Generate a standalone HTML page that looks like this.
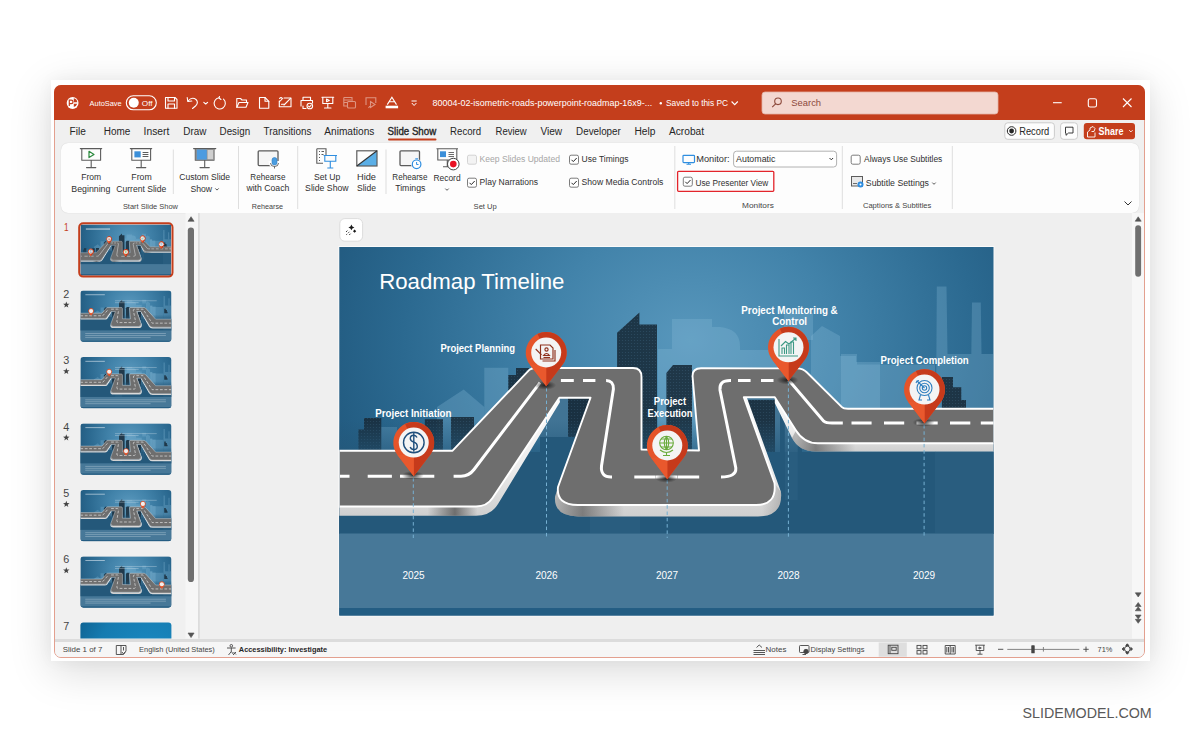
<!DOCTYPE html>
<html><head><meta charset="utf-8">
<style>
*{margin:0;padding:0;box-sizing:border-box}
html,body{width:1200px;height:743px;overflow:hidden;background:#fff}
body{position:relative;font-family:"Liberation Sans",sans-serif;color:#262626}
.b{position:absolute}
svg text{font-family:"Liberation Sans",sans-serif}
</style></head><body>
<div class="b" style="left:51px;top:80px;width:1099px;height:581px;background:#fff;box-shadow:0 10px 40px rgba(0,0,0,0.15),0 0 16px rgba(0,0,0,0.04)"></div>
<div class="b" style="left:54px;top:85px;width:1091px;height:573px;border:1px solid #e3a08f;border-radius:7px;background:#f0f0f0"></div>
<div class="b" style="left:54px;top:85px;width:1091px;height:35px;background:#c43e1c;border-radius:7px 7px 0 0"></div>
<div class="b" style="left:61px;top:142.5px;width:1078px;height:70px;background:#fdfdfd;border-radius:7px;box-shadow:0 0 1px rgba(0,0,0,0.2)"></div>
<div class="b" style="left:199px;top:213px;width:934px;height:428px;background:#efefef"></div>
<div class="b" style="left:55px;top:638.8px;width:1089px;height:18.2px;background:#f6f6f6;border-top:3px solid #dcdcdc;border-radius:0 0 6px 6px"></div>
<svg class="ov" width="1200" height="743" viewBox="0 0 1200 743" style="position:absolute;left:0;top:0">
<defs>
<clipPath id="sc"><rect x="339.3" y="247" width="654.2" height="368.5"/></clipPath>
<radialGradient id="bg" cx="690" cy="340" r="400" gradientUnits="userSpaceOnUse" gradientTransform="translate(690,340) scale(1,0.85) translate(-690,-340)">
 <stop offset="0" stop-color="#5897bc"/><stop offset="0.35" stop-color="#4283aa"/><stop offset="0.72" stop-color="#2b6990"/><stop offset="1" stop-color="#1f567b"/>
</radialGradient>
<linearGradient id="low" x1="0" y1="420" x2="0" y2="470" gradientUnits="userSpaceOnUse">
 <stop offset="0" stop-color="#24587a" stop-opacity="0"/><stop offset="1" stop-color="#24587a" stop-opacity="1"/>
</linearGradient>
<linearGradient id="slab" x1="0" y1="0" x2="0" y2="1">
 <stop offset="0" stop-color="#fbfbfb"/><stop offset="0.6" stop-color="#ececec"/><stop offset="1" stop-color="#cfcfcf"/>
</linearGradient>
<linearGradient id="pinL" x1="0" y1="0" x2="1" y2="0">
 <stop offset="0.5" stop-color="#e6552a"/><stop offset="0.5" stop-color="#cf441f"/>
</linearGradient>
<linearGradient id="sd1" x1="339" x2="500" y1="0" y2="0" gradientUnits="userSpaceOnUse"><stop offset="0.55" stop-color="#444" stop-opacity="0"/><stop offset="0.72" stop-color="#444" stop-opacity="0.7"/><stop offset="0.86" stop-color="#444" stop-opacity="0"/></linearGradient>
<linearGradient id="sd2" x1="555" x2="785" y1="0" y2="0" gradientUnits="userSpaceOnUse"><stop offset="0" stop-color="#444" stop-opacity="0.25"/><stop offset="0.12" stop-color="#444" stop-opacity="0.6"/><stop offset="0.3" stop-color="#444" stop-opacity="0"/><stop offset="0.9" stop-color="#444" stop-opacity="0"/><stop offset="1" stop-color="#444" stop-opacity="0.3"/></linearGradient>
<linearGradient id="sd3" x1="796" x2="994" y1="0" y2="0" gradientUnits="userSpaceOnUse"><stop offset="0" stop-color="#444" stop-opacity="0.3"/><stop offset="0.1" stop-color="#444" stop-opacity="0.6"/><stop offset="0.3" stop-color="#444" stop-opacity="0"/></linearGradient>
<linearGradient id="hole" x1="0" y1="396" x2="0" y2="440" gradientUnits="userSpaceOnUse"><stop offset="0" stop-color="#26587a"/><stop offset="1" stop-color="#24587a"/></linearGradient>
<radialGradient id="psh"><stop offset="0" stop-color="#111" stop-opacity="0.85"/><stop offset="1" stop-color="#111" stop-opacity="0"/></radialGradient>
<pattern id="dots" width="3" height="3" patternUnits="userSpaceOnUse"><rect width="3" height="3" fill="#182c3b"/><circle cx="1.5" cy="1.5" r="0.6" fill="#284357"/></pattern>
</defs><rect x="338.3" y="246" width="656.2" height="370.5" fill="#fafafa"/><g clip-path="url(#sc)"><g>
<rect x="339" y="246" width="656" height="371" fill="url(#bg)"/>
<rect x="540" y="396" width="60" height="120" fill="url(#hole)"/>
<rect x="738" y="396" width="64" height="120" fill="url(#hole)"/>
<g fill="#8cc0dc" fill-opacity="0.28"><path d="M381,427 H397 V452 H381Z"/><path d="M437,407 L463.7,389.5 L484.3,407 V452 H437Z"/><path d="M484.3,367.8 H508.3 V452 H484.3Z"/><path d="M672,319 H712 V327 H720 Q740,329 740,346 V452 H672Z"/><path d="M740,350 H780 V452 H740Z"/><path d="M658,349 H672 V452 H658Z"/><path d="M811,336 L822,326 L840,336 V356 H856 V362 H880 V452 H811Z"/><path d="M841,354 H857 V452 H841Z"/><path d="M784,313 H813 V340 H784Z"/><path d="M857,364.4 H935 V452 H857Z"/><path d="M936.8,286.6 H946.5 L947.5,354 H993.5 V452 H935.8Z"/><path d="M972,302.6 H980.8 L981.5,354 H971.3Z"/><path d="M540,398 H568 V437 H540Z"/><path d="M784.8,397 H797.7 V457.5 H784.8Z"/></g><g fill="url(#dots)" fill-opacity="0.9"><path d="M358.4,429.6 H364 V418 H381.3 V452 H358.4Z"/><path d="M424.8,419.3 H443 V452 H424.8Z"/><path d="M451,417 H474 V452 H451Z"/><path d="M508.3,375 H516 V368 H529 V452 H508.3Z"/><path d="M617.1,332.7 L639.4,312.5 V324.6 H657 V452 H617.1Z"/><path d="M666.4,373 L673,365 H692 V452 H666.4Z"/><path d="M941.9,377 H953 V387.3 H961.3 V399.9 H966 V410 H941.9Z"/><path d="M568,398 H597 V437 H568Z"/><path d="M748,400 H775 V480 H748Z"/></g><rect x="339" y="420" width="656" height="114" fill="url(#low)"/><rect x="339" y="452" width="656" height="82" fill="#24587a"/><g fill="#8cc0dc" fill-opacity="0.06"><path d="M590,452 H640 V533 H590Z"/><path d="M784.8,452 H797.7 V500 H784.8Z"/><path d="M935,452 H993 V533 H935Z"/></g><rect x="339" y="533.5" width="656" height="75" fill="#477898"/><rect x="339" y="608.1" width="656" height="8" fill="#235d83"/></g><g><g fill="url(#slab)"><path d="M339,506.5 L476,506.5 Q487,506.5 492.5,498 L559.3,397.7 L560,402 L498,504 Q491,515.8 476,515.8 L339,515.8Z"/><path d="M558,487 Q556,505 578,505 L756,505 Q777,505 775,484 L744,397.5 L747,398 L781,492 Q783,516.5 758,516.5 L578,516.5 Q554,516 555,497Z"/><path d="M774.8,397.3 L796,430.5 Q804,443.3 818,443.3 L994,443.3 L994,451.5 L816,451.5 Q799,451.5 792,438 L774.8,403Z"/></g><g fill="#3a3a3a"><path d="M339,506.5 L476,506.5 Q487,506.5 492.5,498 L498,504 Q491,515.8 476,515.8 L339,515.8Z" fill="url(#sd1)"/><path d="M558,487 Q556,505 578,505 L756,505 Q777,505 775,484 L781,492 Q783,516.5 758,516.5 L578,516.5 Q554,516 555,497Z" fill="url(#sd2)"/><path d="M796,430.5 Q804,443.3 818,443.3 L994,443.3 L994,451.5 L816,451.5 Q799,451.5 792,438Z" fill="url(#sd3)"/></g><path d="M339,450.7 L452.6,450.7 L529.3,369.9 Q531.5,368 536,368 L633,368 Q641.5,368 641.5,377 L641.5,449.5 L699,450.5 L692.5,376 Q692.5,368.3 701,368.3 L797,368.4 Q803,368.4 807,372.5 L841.9,407.1 Q843.5,408.7 848,408.7 L994,408.7 L994,443.3 L818,443.3 Q804,443.3 796,430.5 L774.8,397.3 L743.8,397.3 L774.5,483 Q777,505 756,505 L578,505 Q556,505 558,487 L590.5,397.7 L559.3,397.7 L492.5,498 Q487,506.5 476,506.5 L339,506.5Z" fill="#6e6e6e" stroke="#ffffff" stroke-width="1.9" stroke-linejoin="round"/><g stroke="#ffffff" stroke-width="3" fill="none"><line x1="340" y1="476.2" x2="349.5" y2="476.2"/><line x1="367.7" y1="476.2" x2="391.9" y2="476.2"/><line x1="400" y1="476.2" x2="434.3" y2="476.2"/><line x1="560.9" y1="380.5" x2="573.8" y2="380.5"/><line x1="583" y1="380.5" x2="595.4" y2="380.5"/><line x1="738" y1="380.5" x2="750.6" y2="380.5"/><line x1="761" y1="380.5" x2="773.5" y2="380.5"/><line x1="634.3" y1="477" x2="655.7" y2="477"/><line x1="656" y1="477" x2="677" y2="477"/><line x1="677.4" y1="477" x2="699.2" y2="477"/><line x1="851.5" y1="423" x2="871.6" y2="423"/><line x1="884" y1="423" x2="904.2" y2="423"/><line x1="916.5" y1="423" x2="937.7" y2="423"/><line x1="950" y1="423" x2="970.3" y2="423"/><line x1="980.8" y1="423" x2="994" y2="423"/><path d="M453.6,476.2 L461,476.2 Q469,476.2 474,469.5 L540,382.6"/><path d="M606.1,380.5 Q613.6,380.5 613.4,389 L601.5,466 Q600.5,477 611,477 L612,477"/><path d="M721,477 Q736.5,477 735.8,468 L720,390 Q719,380.6 730,380.6 L731,380.6"/><path d="M788,380 L791,382.8 L823.7,421.1 Q826,423 832,423 L842.8,423"/></g></g><g><line x1="413.3" y1="478" x2="413.3" y2="538" stroke="#76b0d2" stroke-width="1" stroke-dasharray="3.5 2.8"/><line x1="546.5" y1="388" x2="546.5" y2="538" stroke="#76b0d2" stroke-width="1" stroke-dasharray="3.5 2.8"/><line x1="667.2" y1="480" x2="667.2" y2="538" stroke="#76b0d2" stroke-width="1" stroke-dasharray="3.5 2.8"/><line x1="788.4" y1="382" x2="788.4" y2="538" stroke="#76b0d2" stroke-width="1" stroke-dasharray="3.5 2.8"/><line x1="924.1" y1="425" x2="924.1" y2="538" stroke="#76b0d2" stroke-width="1" stroke-dasharray="3.5 2.8"/></g><g><ellipse cx="412.75" cy="475.35" rx="11" ry="4.5" fill="url(#psh)"/><path d="M397.47,454.92 A20.45,20.45 0 1 1 430.03,454.92 L413.75,476.35Z" fill="#e5542a"/><path d="M405.11,424.02 A20.45,20.45 0 0 1 430.03,454.92 L413.75,476.35 L413.75,442.55Z" fill="#c63a1b"/><path d="M397.47,454.92 L413.75,476.35 L413.75,454.92Z" fill="#e9582d"/><circle cx="413.75" cy="442.55" r="15" fill="#f4f4f4"/><g fill="none" stroke="#1f4f7c" stroke-width="1.4"><circle cx="413.8" cy="442.5" r="10.3"/><path d="M417,437.5 Q416,435.3 413.6,435.3 Q410.3,435.3 410.3,438.5 Q410.3,441 413.8,442.2 Q417.3,443.4 417.3,446.2 Q417.3,449.5 413.8,449.5 Q411,449.5 410.2,447"/><path d="M413.8,433 V451.8"/></g><ellipse cx="545.2" cy="385.3" rx="11" ry="4.5" fill="url(#psh)"/><path d="M529.92,364.87 A20.45,20.45 0 1 1 562.48,364.87 L546.20,386.30Z" fill="#e5542a"/><path d="M537.56,333.97 A20.45,20.45 0 0 1 562.48,364.87 L546.20,386.30 L546.20,352.50Z" fill="#c63a1b"/><path d="M529.92,364.87 L546.20,386.30 L546.20,364.87Z" fill="#e9582d"/><circle cx="546.2" cy="352.5" r="15" fill="#f4f4f4"/><g fill="none" stroke="#8e311d" stroke-width="1.15"><path d="M540.5,345 H550 L553,348 V359 H540.5Z"/><path d="M542.5,361 H555 V350"/><circle cx="546.5" cy="349.5" r="1.6"/><path d="M543.5,355.5 Q546.5,351.5 549.5,355.5Z"/><path d="M535.7,349 L541.5,354.8"/><path d="M543.5,357.5 H550"/></g><ellipse cx="666.3" cy="478.3" rx="11" ry="4.5" fill="url(#psh)"/><path d="M651.02,457.87 A20.45,20.45 0 1 1 683.58,457.87 L667.30,479.30Z" fill="#e5542a"/><path d="M658.66,426.97 A20.45,20.45 0 0 1 683.58,457.87 L667.30,479.30 L667.30,445.50Z" fill="#c63a1b"/><path d="M651.02,457.87 L667.30,479.30 L667.30,457.87Z" fill="#e9582d"/><circle cx="667.3" cy="445.5" r="15" fill="#f4f4f4"/><g fill="none" stroke="#6aab3c" stroke-width="1.1"><circle cx="666.5" cy="443" r="6.8"/><path d="M659.7,443 H673.3 M666.5,436.2 V449.8 M661,439 H672 M661,447 H672"/><path d="M666.5,436.2 Q662,443 666.5,449.8 M666.5,436.2 Q671,443 666.5,449.8"/><path d="M660,450 Q666.5,455 673,450 M666.5,452 V455.5 M663,455.5 H670"/></g><ellipse cx="787.5" cy="380.1" rx="11" ry="4.5" fill="url(#psh)"/><path d="M772.22,359.67 A20.45,20.45 0 1 1 804.78,359.67 L788.50,381.10Z" fill="#e5542a"/><path d="M779.86,328.77 A20.45,20.45 0 0 1 804.78,359.67 L788.50,381.10 L788.50,347.30Z" fill="#c63a1b"/><path d="M772.22,359.67 L788.50,381.10 L788.50,359.67Z" fill="#e9582d"/><circle cx="788.5" cy="347.3" r="15" fill="#f4f4f4"/><g fill="none" stroke="#3e9a86" stroke-width="1.1"><path d="M779,339 V356 H798"/><path d="M782,354 V348 H784.5 V354 M786.5,354 V345 H789 V354 M791,354 V342 H793.5 V354"/><path d="M781,346 L785.5,341.5 L789,344 L796,338 M793,338 H796 V341"/></g><ellipse cx="923.5" cy="422.40000000000003" rx="11" ry="4.5" fill="url(#psh)"/><path d="M908.22,401.97 A20.45,20.45 0 1 1 940.78,401.97 L924.50,423.40Z" fill="#e5542a"/><path d="M915.86,371.07 A20.45,20.45 0 0 1 940.78,401.97 L924.50,423.40 L924.50,389.60Z" fill="#c63a1b"/><path d="M908.22,401.97 L924.50,423.40 L924.50,401.97Z" fill="#e9582d"/><circle cx="924.5" cy="389.6" r="15" fill="#f4f4f4"/><g fill="none" stroke="#2f7fbf" stroke-width="1.1"><circle cx="924.5" cy="388" r="7.5"/><circle cx="924.5" cy="388" r="4.8"/><circle cx="924.5" cy="388" r="2.2"/><path d="M924.5,388 L917,381 M916,383 L917,381 L919,380.5"/><path d="M920.5,395 L919,400 H922 M928.5,395 L930,400 H927"/></g></g><text x="379.2" y="289.3" font-size="22.5" fill="#ffffff" font-weight="normal" textLength="185.2" lengthAdjust="spacingAndGlyphs">Roadmap Timeline</text>
<text x="375.2" y="417.4" font-size="10.8" fill="#ffffff" font-weight="bold" textLength="76.3" lengthAdjust="spacingAndGlyphs">Project Initiation</text>
<text x="440.4" y="352.2" font-size="10.8" fill="#ffffff" font-weight="bold" textLength="74.7" lengthAdjust="spacingAndGlyphs">Project Planning</text>
<text x="653.8" y="405.4" font-size="10.8" fill="#ffffff" font-weight="bold" textLength="32.3" lengthAdjust="spacingAndGlyphs">Project</text>
<text x="647.6" y="417.0" font-size="10.8" fill="#ffffff" font-weight="bold" textLength="44.8" lengthAdjust="spacingAndGlyphs">Execution</text>
<text x="741.3" y="314.0" font-size="10.8" fill="#ffffff" font-weight="bold" textLength="96.4" lengthAdjust="spacingAndGlyphs">Project Monitoring &amp;</text>
<text x="772.3" y="325.0" font-size="10.8" fill="#ffffff" font-weight="bold" textLength="34.8" lengthAdjust="spacingAndGlyphs">Control</text>
<text x="880.6" y="364.0" font-size="10.8" fill="#ffffff" font-weight="bold" textLength="88.1" lengthAdjust="spacingAndGlyphs">Project Completion</text>
<text x="402.4" y="578.9" font-size="10.2" fill="#ffffff" font-weight="normal" textLength="22.3" lengthAdjust="spacingAndGlyphs">2025</text>
<text x="535.4" y="578.9" font-size="10.2" fill="#ffffff" font-weight="normal" textLength="22.3" lengthAdjust="spacingAndGlyphs">2026</text>
<text x="655.9" y="578.9" font-size="10.2" fill="#ffffff" font-weight="normal" textLength="22.3" lengthAdjust="spacingAndGlyphs">2027</text>
<text x="777.4" y="578.9" font-size="10.2" fill="#ffffff" font-weight="normal" textLength="22.3" lengthAdjust="spacingAndGlyphs">2028</text>
<text x="912.9" y="578.9" font-size="10.2" fill="#ffffff" font-weight="normal" textLength="22.3" lengthAdjust="spacingAndGlyphs">2029</text>
</g>
<defs><clipPath id="tc"><rect x="339.3" y="247" width="654.2" height="368.5" rx="22"/></clipPath></defs><g transform="translate(80.5,224.5) scale(0.13834) translate(-339.3,-247)"><g clip-path="url(#sc)"><g>
<rect x="339" y="246" width="656" height="371" fill="url(#bg)"/>
<rect x="540" y="396" width="60" height="120" fill="url(#hole)"/>
<rect x="738" y="396" width="64" height="120" fill="url(#hole)"/>
<g fill="#8cc0dc" fill-opacity="0.28"><path d="M381,427 H397 V452 H381Z"/><path d="M437,407 L463.7,389.5 L484.3,407 V452 H437Z"/><path d="M484.3,367.8 H508.3 V452 H484.3Z"/><path d="M672,319 H712 V327 H720 Q740,329 740,346 V452 H672Z"/><path d="M740,350 H780 V452 H740Z"/><path d="M658,349 H672 V452 H658Z"/><path d="M811,336 L822,326 L840,336 V356 H856 V362 H880 V452 H811Z"/><path d="M841,354 H857 V452 H841Z"/><path d="M784,313 H813 V340 H784Z"/><path d="M857,364.4 H935 V452 H857Z"/><path d="M936.8,286.6 H946.5 L947.5,354 H993.5 V452 H935.8Z"/><path d="M972,302.6 H980.8 L981.5,354 H971.3Z"/><path d="M540,398 H568 V437 H540Z"/><path d="M784.8,397 H797.7 V457.5 H784.8Z"/></g><g fill="url(#dots)" fill-opacity="0.9"><path d="M358.4,429.6 H364 V418 H381.3 V452 H358.4Z"/><path d="M424.8,419.3 H443 V452 H424.8Z"/><path d="M451,417 H474 V452 H451Z"/><path d="M508.3,375 H516 V368 H529 V452 H508.3Z"/><path d="M617.1,332.7 L639.4,312.5 V324.6 H657 V452 H617.1Z"/><path d="M666.4,373 L673,365 H692 V452 H666.4Z"/><path d="M941.9,377 H953 V387.3 H961.3 V399.9 H966 V410 H941.9Z"/><path d="M568,398 H597 V437 H568Z"/><path d="M748,400 H775 V480 H748Z"/></g><rect x="339" y="420" width="656" height="114" fill="url(#low)"/><rect x="339" y="452" width="656" height="82" fill="#24587a"/><g fill="#8cc0dc" fill-opacity="0.06"><path d="M590,452 H640 V533 H590Z"/><path d="M784.8,452 H797.7 V500 H784.8Z"/><path d="M935,452 H993 V533 H935Z"/></g><rect x="339" y="533.5" width="656" height="75" fill="#477898"/><rect x="339" y="608.1" width="656" height="8" fill="#235d83"/></g><g><g fill="url(#slab)"><path d="M339,506.5 L476,506.5 Q487,506.5 492.5,498 L559.3,397.7 L560,402 L498,504 Q491,515.8 476,515.8 L339,515.8Z"/><path d="M558,487 Q556,505 578,505 L756,505 Q777,505 775,484 L744,397.5 L747,398 L781,492 Q783,516.5 758,516.5 L578,516.5 Q554,516 555,497Z"/><path d="M774.8,397.3 L796,430.5 Q804,443.3 818,443.3 L994,443.3 L994,451.5 L816,451.5 Q799,451.5 792,438 L774.8,403Z"/></g><g fill="#3a3a3a"><path d="M339,506.5 L476,506.5 Q487,506.5 492.5,498 L498,504 Q491,515.8 476,515.8 L339,515.8Z" fill="url(#sd1)"/><path d="M558,487 Q556,505 578,505 L756,505 Q777,505 775,484 L781,492 Q783,516.5 758,516.5 L578,516.5 Q554,516 555,497Z" fill="url(#sd2)"/><path d="M796,430.5 Q804,443.3 818,443.3 L994,443.3 L994,451.5 L816,451.5 Q799,451.5 792,438Z" fill="url(#sd3)"/></g><path d="M339,450.7 L452.6,450.7 L529.3,369.9 Q531.5,368 536,368 L633,368 Q641.5,368 641.5,377 L641.5,449.5 L699,450.5 L692.5,376 Q692.5,368.3 701,368.3 L797,368.4 Q803,368.4 807,372.5 L841.9,407.1 Q843.5,408.7 848,408.7 L994,408.7 L994,443.3 L818,443.3 Q804,443.3 796,430.5 L774.8,397.3 L743.8,397.3 L774.5,483 Q777,505 756,505 L578,505 Q556,505 558,487 L590.5,397.7 L559.3,397.7 L492.5,498 Q487,506.5 476,506.5 L339,506.5Z" fill="#6e6e6e" stroke="#ffffff" stroke-width="1.9" stroke-linejoin="round"/><g stroke="#ffffff" stroke-width="3" fill="none"><line x1="340" y1="476.2" x2="349.5" y2="476.2"/><line x1="367.7" y1="476.2" x2="391.9" y2="476.2"/><line x1="400" y1="476.2" x2="434.3" y2="476.2"/><line x1="560.9" y1="380.5" x2="573.8" y2="380.5"/><line x1="583" y1="380.5" x2="595.4" y2="380.5"/><line x1="738" y1="380.5" x2="750.6" y2="380.5"/><line x1="761" y1="380.5" x2="773.5" y2="380.5"/><line x1="634.3" y1="477" x2="655.7" y2="477"/><line x1="656" y1="477" x2="677" y2="477"/><line x1="677.4" y1="477" x2="699.2" y2="477"/><line x1="851.5" y1="423" x2="871.6" y2="423"/><line x1="884" y1="423" x2="904.2" y2="423"/><line x1="916.5" y1="423" x2="937.7" y2="423"/><line x1="950" y1="423" x2="970.3" y2="423"/><line x1="980.8" y1="423" x2="994" y2="423"/><path d="M453.6,476.2 L461,476.2 Q469,476.2 474,469.5 L540,382.6"/><path d="M606.1,380.5 Q613.6,380.5 613.4,389 L601.5,466 Q600.5,477 611,477 L612,477"/><path d="M721,477 Q736.5,477 735.8,468 L720,390 Q719,380.6 730,380.6 L731,380.6"/><path d="M788,380 L791,382.8 L823.7,421.1 Q826,423 832,423 L842.8,423"/></g></g><g><ellipse cx="412.75" cy="475.35" rx="11" ry="4.5" fill="url(#psh)"/><path d="M397.47,454.92 A20.45,20.45 0 1 1 430.03,454.92 L413.75,476.35Z" fill="#e5542a"/><path d="M405.11,424.02 A20.45,20.45 0 0 1 430.03,454.92 L413.75,476.35 L413.75,442.55Z" fill="#c63a1b"/><path d="M397.47,454.92 L413.75,476.35 L413.75,454.92Z" fill="#e9582d"/><circle cx="413.75" cy="442.55" r="15" fill="#f4f4f4"/><g fill="none" stroke="#1f4f7c" stroke-width="1.4"><circle cx="413.8" cy="442.5" r="10.3"/><path d="M417,437.5 Q416,435.3 413.6,435.3 Q410.3,435.3 410.3,438.5 Q410.3,441 413.8,442.2 Q417.3,443.4 417.3,446.2 Q417.3,449.5 413.8,449.5 Q411,449.5 410.2,447"/><path d="M413.8,433 V451.8"/></g><ellipse cx="545.2" cy="385.3" rx="11" ry="4.5" fill="url(#psh)"/><path d="M529.92,364.87 A20.45,20.45 0 1 1 562.48,364.87 L546.20,386.30Z" fill="#e5542a"/><path d="M537.56,333.97 A20.45,20.45 0 0 1 562.48,364.87 L546.20,386.30 L546.20,352.50Z" fill="#c63a1b"/><path d="M529.92,364.87 L546.20,386.30 L546.20,364.87Z" fill="#e9582d"/><circle cx="546.2" cy="352.5" r="15" fill="#f4f4f4"/><g fill="none" stroke="#8e311d" stroke-width="1.15"><path d="M540.5,345 H550 L553,348 V359 H540.5Z"/><path d="M542.5,361 H555 V350"/><circle cx="546.5" cy="349.5" r="1.6"/><path d="M543.5,355.5 Q546.5,351.5 549.5,355.5Z"/><path d="M535.7,349 L541.5,354.8"/><path d="M543.5,357.5 H550"/></g><ellipse cx="666.3" cy="478.3" rx="11" ry="4.5" fill="url(#psh)"/><path d="M651.02,457.87 A20.45,20.45 0 1 1 683.58,457.87 L667.30,479.30Z" fill="#e5542a"/><path d="M658.66,426.97 A20.45,20.45 0 0 1 683.58,457.87 L667.30,479.30 L667.30,445.50Z" fill="#c63a1b"/><path d="M651.02,457.87 L667.30,479.30 L667.30,457.87Z" fill="#e9582d"/><circle cx="667.3" cy="445.5" r="15" fill="#f4f4f4"/><g fill="none" stroke="#6aab3c" stroke-width="1.1"><circle cx="666.5" cy="443" r="6.8"/><path d="M659.7,443 H673.3 M666.5,436.2 V449.8 M661,439 H672 M661,447 H672"/><path d="M666.5,436.2 Q662,443 666.5,449.8 M666.5,436.2 Q671,443 666.5,449.8"/><path d="M660,450 Q666.5,455 673,450 M666.5,452 V455.5 M663,455.5 H670"/></g><ellipse cx="787.5" cy="380.1" rx="11" ry="4.5" fill="url(#psh)"/><path d="M772.22,359.67 A20.45,20.45 0 1 1 804.78,359.67 L788.50,381.10Z" fill="#e5542a"/><path d="M779.86,328.77 A20.45,20.45 0 0 1 804.78,359.67 L788.50,381.10 L788.50,347.30Z" fill="#c63a1b"/><path d="M772.22,359.67 L788.50,381.10 L788.50,359.67Z" fill="#e9582d"/><circle cx="788.5" cy="347.3" r="15" fill="#f4f4f4"/><g fill="none" stroke="#3e9a86" stroke-width="1.1"><path d="M779,339 V356 H798"/><path d="M782,354 V348 H784.5 V354 M786.5,354 V345 H789 V354 M791,354 V342 H793.5 V354"/><path d="M781,346 L785.5,341.5 L789,344 L796,338 M793,338 H796 V341"/></g><ellipse cx="923.5" cy="422.40000000000003" rx="11" ry="4.5" fill="url(#psh)"/><path d="M908.22,401.97 A20.45,20.45 0 1 1 940.78,401.97 L924.50,423.40Z" fill="#e5542a"/><path d="M915.86,371.07 A20.45,20.45 0 0 1 940.78,401.97 L924.50,423.40 L924.50,389.60Z" fill="#c63a1b"/><path d="M908.22,401.97 L924.50,423.40 L924.50,401.97Z" fill="#e9582d"/><circle cx="924.5" cy="389.6" r="15" fill="#f4f4f4"/><g fill="none" stroke="#2f7fbf" stroke-width="1.1"><circle cx="924.5" cy="388" r="7.5"/><circle cx="924.5" cy="388" r="4.8"/><circle cx="924.5" cy="388" r="2.2"/><path d="M924.5,388 L917,381 M916,383 L917,381 L919,380.5"/><path d="M920.5,395 L919,400 H922 M928.5,395 L930,400 H927"/></g></g><rect x="378" y="274" width="175" height="12" fill="#fff" fill-opacity="0.45"/></g></g><g transform="translate(80.4,290.6) scale(0.1391) translate(-339.3,-247)"><g clip-path="url(#tc)"><g>
<rect x="339" y="246" width="656" height="371" fill="url(#bg)"/>
<rect x="540" y="396" width="60" height="120" fill="url(#hole)"/>
<rect x="738" y="396" width="64" height="120" fill="url(#hole)"/>
<g fill="#8cc0dc" fill-opacity="0.28"><path d="M381,427 H397 V452 H381Z"/><path d="M437,407 L463.7,389.5 L484.3,407 V452 H437Z"/><path d="M484.3,367.8 H508.3 V452 H484.3Z"/><path d="M672,319 H712 V327 H720 Q740,329 740,346 V452 H672Z"/><path d="M740,350 H780 V452 H740Z"/><path d="M658,349 H672 V452 H658Z"/><path d="M811,336 L822,326 L840,336 V356 H856 V362 H880 V452 H811Z"/><path d="M841,354 H857 V452 H841Z"/><path d="M784,313 H813 V340 H784Z"/><path d="M857,364.4 H935 V452 H857Z"/><path d="M936.8,286.6 H946.5 L947.5,354 H993.5 V452 H935.8Z"/><path d="M972,302.6 H980.8 L981.5,354 H971.3Z"/><path d="M540,398 H568 V437 H540Z"/><path d="M784.8,397 H797.7 V457.5 H784.8Z"/></g><g fill="url(#dots)" fill-opacity="0.9"><path d="M358.4,429.6 H364 V418 H381.3 V452 H358.4Z"/><path d="M424.8,419.3 H443 V452 H424.8Z"/><path d="M451,417 H474 V452 H451Z"/><path d="M508.3,375 H516 V368 H529 V452 H508.3Z"/><path d="M617.1,332.7 L639.4,312.5 V324.6 H657 V452 H617.1Z"/><path d="M666.4,373 L673,365 H692 V452 H666.4Z"/><path d="M941.9,377 H953 V387.3 H961.3 V399.9 H966 V410 H941.9Z"/><path d="M568,398 H597 V437 H568Z"/><path d="M748,400 H775 V480 H748Z"/></g><rect x="339" y="420" width="656" height="114" fill="url(#low)"/><rect x="339" y="452" width="656" height="82" fill="#24587a"/><g fill="#8cc0dc" fill-opacity="0.06"><path d="M590,452 H640 V533 H590Z"/><path d="M784.8,452 H797.7 V500 H784.8Z"/><path d="M935,452 H993 V533 H935Z"/></g><rect x="339" y="533.5" width="656" height="75" fill="#477898"/><rect x="339" y="608.1" width="656" height="8" fill="#235d83"/></g><g><path d="M339,447 L515,447 Q524,447 528,441 L559.3,397.7 L561,404 L532,449 Q527,455.5 515,455.5 L339,455.5Z" fill="url(#slab)"/><path d="M558,487 Q556,505 578,505 L756,505 Q777,505 775,484 L744,397.5 L747,398 L781,492 Q783,516.5 758,516.5 L578,516.5 Q554,516 555,497Z" fill="url(#slab)"/><path d="M774.8,397.3 L838,500 Q845,510 860,510 L994,510 L994,519 L858,519 Q840,519 832,505 L774.8,404Z" fill="url(#slab)"/><path d="M339,409.5 L494,409.5 L529.3,369.9 Q531.5,368 536,368 L633,368 Q641.5,368 641.5,377 L641.5,449.5 L699,450.5 L692.5,376 Q692.5,368.3 701,368.3 L797,368.4 Q803,368.4 807,372.5 L880,452.6 L994,452.6 L994,510 L860,510 Q845,510 838,500 L774.8,397.3 L743.8,397.3 L774.5,483 Q777,505 756,505 L578,505 Q556,505 558,487 L590.5,397.7 L559.3,397.7 L528,441 Q524,447 515,447 L339,447Z" fill="#6e6e6e" stroke="#fff" stroke-width="2.5"/><g stroke="#fff" stroke-width="4" fill="none" stroke-dasharray="20 12"><path d="M339,428 H500 L540,382"/><path d="M560,380.5 H606 Q613.6,380.5 613.4,389 L601.5,466 Q600.5,477 611,477 H721 Q736.5,477 735.8,468 L720,390 Q719,380.6 730,380.6 H790 L855,481 H994"/></g></g><path d="M399.65,406.36 A20.45,20.45 0 1 1 432.35,406.36 L416,427.8Z" fill="#e5542a"/><circle cx="416" cy="394" r="15" fill="#f0f0f0"/><g fill="#dfeaf2" fill-opacity="0.45"><rect x="374" y="552" width="580" height="5"/><rect x="374" y="566" width="580" height="5"/><rect x="374" y="580" width="470" height="5"/><rect x="588" y="318" width="300" height="5"/><rect x="588" y="332" width="170" height="5"/><rect x="375" y="274" width="140" height="6" fill-opacity="0.7"/></g><rect x="339" y="533.5" width="656" height="75" fill="#497796" fill-opacity="0.0"/></g></g><g transform="translate(80.4,357.1) scale(0.1391) translate(-339.3,-247)"><g clip-path="url(#tc)"><g>
<rect x="339" y="246" width="656" height="371" fill="url(#bg)"/>
<rect x="540" y="396" width="60" height="120" fill="url(#hole)"/>
<rect x="738" y="396" width="64" height="120" fill="url(#hole)"/>
<g fill="#8cc0dc" fill-opacity="0.28"><path d="M381,427 H397 V452 H381Z"/><path d="M437,407 L463.7,389.5 L484.3,407 V452 H437Z"/><path d="M484.3,367.8 H508.3 V452 H484.3Z"/><path d="M672,319 H712 V327 H720 Q740,329 740,346 V452 H672Z"/><path d="M740,350 H780 V452 H740Z"/><path d="M658,349 H672 V452 H658Z"/><path d="M811,336 L822,326 L840,336 V356 H856 V362 H880 V452 H811Z"/><path d="M841,354 H857 V452 H841Z"/><path d="M784,313 H813 V340 H784Z"/><path d="M857,364.4 H935 V452 H857Z"/><path d="M936.8,286.6 H946.5 L947.5,354 H993.5 V452 H935.8Z"/><path d="M972,302.6 H980.8 L981.5,354 H971.3Z"/><path d="M540,398 H568 V437 H540Z"/><path d="M784.8,397 H797.7 V457.5 H784.8Z"/></g><g fill="url(#dots)" fill-opacity="0.9"><path d="M358.4,429.6 H364 V418 H381.3 V452 H358.4Z"/><path d="M424.8,419.3 H443 V452 H424.8Z"/><path d="M451,417 H474 V452 H451Z"/><path d="M508.3,375 H516 V368 H529 V452 H508.3Z"/><path d="M617.1,332.7 L639.4,312.5 V324.6 H657 V452 H617.1Z"/><path d="M666.4,373 L673,365 H692 V452 H666.4Z"/><path d="M941.9,377 H953 V387.3 H961.3 V399.9 H966 V410 H941.9Z"/><path d="M568,398 H597 V437 H568Z"/><path d="M748,400 H775 V480 H748Z"/></g><rect x="339" y="420" width="656" height="114" fill="url(#low)"/><rect x="339" y="452" width="656" height="82" fill="#24587a"/><g fill="#8cc0dc" fill-opacity="0.06"><path d="M590,452 H640 V533 H590Z"/><path d="M784.8,452 H797.7 V500 H784.8Z"/><path d="M935,452 H993 V533 H935Z"/></g><rect x="339" y="533.5" width="656" height="75" fill="#477898"/><rect x="339" y="608.1" width="656" height="8" fill="#235d83"/></g><g><path d="M339,447 L515,447 Q524,447 528,441 L559.3,397.7 L561,404 L532,449 Q527,455.5 515,455.5 L339,455.5Z" fill="url(#slab)"/><path d="M558,487 Q556,505 578,505 L756,505 Q777,505 775,484 L744,397.5 L747,398 L781,492 Q783,516.5 758,516.5 L578,516.5 Q554,516 555,497Z" fill="url(#slab)"/><path d="M774.8,397.3 L838,500 Q845,510 860,510 L994,510 L994,519 L858,519 Q840,519 832,505 L774.8,404Z" fill="url(#slab)"/><path d="M339,409.5 L494,409.5 L529.3,369.9 Q531.5,368 536,368 L633,368 Q641.5,368 641.5,377 L641.5,449.5 L699,450.5 L692.5,376 Q692.5,368.3 701,368.3 L797,368.4 Q803,368.4 807,372.5 L880,452.6 L994,452.6 L994,510 L860,510 Q845,510 838,500 L774.8,397.3 L743.8,397.3 L774.5,483 Q777,505 756,505 L578,505 Q556,505 558,487 L590.5,397.7 L559.3,397.7 L528,441 Q524,447 515,447 L339,447Z" fill="#6e6e6e" stroke="#fff" stroke-width="2.5"/><g stroke="#fff" stroke-width="4" fill="none" stroke-dasharray="20 12"><path d="M339,428 H500 L540,382"/><path d="M560,380.5 H606 Q613.6,380.5 613.4,389 L601.5,466 Q600.5,477 611,477 H721 Q736.5,477 735.8,468 L720,390 Q719,380.6 730,380.6 H790 L855,481 H994"/></g></g><path d="M529.85,364.86 A20.45,20.45 0 1 1 562.5500000000001,364.86 L546.2,386.3Z" fill="#e5542a"/><circle cx="546.2" cy="352.5" r="15" fill="#f0f0f0"/><g fill="#dfeaf2" fill-opacity="0.45"><rect x="374" y="552" width="580" height="5"/><rect x="374" y="566" width="580" height="5"/><rect x="374" y="580" width="470" height="5"/><rect x="588" y="318" width="300" height="5"/><rect x="588" y="332" width="170" height="5"/><rect x="375" y="274" width="140" height="6" fill-opacity="0.7"/></g><rect x="339" y="533.5" width="656" height="75" fill="#497796" fill-opacity="0.0"/></g></g><g transform="translate(80.4,423.5) scale(0.1391) translate(-339.3,-247)"><g clip-path="url(#tc)"><g>
<rect x="339" y="246" width="656" height="371" fill="url(#bg)"/>
<rect x="540" y="396" width="60" height="120" fill="url(#hole)"/>
<rect x="738" y="396" width="64" height="120" fill="url(#hole)"/>
<g fill="#8cc0dc" fill-opacity="0.28"><path d="M381,427 H397 V452 H381Z"/><path d="M437,407 L463.7,389.5 L484.3,407 V452 H437Z"/><path d="M484.3,367.8 H508.3 V452 H484.3Z"/><path d="M672,319 H712 V327 H720 Q740,329 740,346 V452 H672Z"/><path d="M740,350 H780 V452 H740Z"/><path d="M658,349 H672 V452 H658Z"/><path d="M811,336 L822,326 L840,336 V356 H856 V362 H880 V452 H811Z"/><path d="M841,354 H857 V452 H841Z"/><path d="M784,313 H813 V340 H784Z"/><path d="M857,364.4 H935 V452 H857Z"/><path d="M936.8,286.6 H946.5 L947.5,354 H993.5 V452 H935.8Z"/><path d="M972,302.6 H980.8 L981.5,354 H971.3Z"/><path d="M540,398 H568 V437 H540Z"/><path d="M784.8,397 H797.7 V457.5 H784.8Z"/></g><g fill="url(#dots)" fill-opacity="0.9"><path d="M358.4,429.6 H364 V418 H381.3 V452 H358.4Z"/><path d="M424.8,419.3 H443 V452 H424.8Z"/><path d="M451,417 H474 V452 H451Z"/><path d="M508.3,375 H516 V368 H529 V452 H508.3Z"/><path d="M617.1,332.7 L639.4,312.5 V324.6 H657 V452 H617.1Z"/><path d="M666.4,373 L673,365 H692 V452 H666.4Z"/><path d="M941.9,377 H953 V387.3 H961.3 V399.9 H966 V410 H941.9Z"/><path d="M568,398 H597 V437 H568Z"/><path d="M748,400 H775 V480 H748Z"/></g><rect x="339" y="420" width="656" height="114" fill="url(#low)"/><rect x="339" y="452" width="656" height="82" fill="#24587a"/><g fill="#8cc0dc" fill-opacity="0.06"><path d="M590,452 H640 V533 H590Z"/><path d="M784.8,452 H797.7 V500 H784.8Z"/><path d="M935,452 H993 V533 H935Z"/></g><rect x="339" y="533.5" width="656" height="75" fill="#477898"/><rect x="339" y="608.1" width="656" height="8" fill="#235d83"/></g><g><path d="M339,447 L515,447 Q524,447 528,441 L559.3,397.7 L561,404 L532,449 Q527,455.5 515,455.5 L339,455.5Z" fill="url(#slab)"/><path d="M558,487 Q556,505 578,505 L756,505 Q777,505 775,484 L744,397.5 L747,398 L781,492 Q783,516.5 758,516.5 L578,516.5 Q554,516 555,497Z" fill="url(#slab)"/><path d="M774.8,397.3 L838,500 Q845,510 860,510 L994,510 L994,519 L858,519 Q840,519 832,505 L774.8,404Z" fill="url(#slab)"/><path d="M339,409.5 L494,409.5 L529.3,369.9 Q531.5,368 536,368 L633,368 Q641.5,368 641.5,377 L641.5,449.5 L699,450.5 L692.5,376 Q692.5,368.3 701,368.3 L797,368.4 Q803,368.4 807,372.5 L880,452.6 L994,452.6 L994,510 L860,510 Q845,510 838,500 L774.8,397.3 L743.8,397.3 L774.5,483 Q777,505 756,505 L578,505 Q556,505 558,487 L590.5,397.7 L559.3,397.7 L528,441 Q524,447 515,447 L339,447Z" fill="#6e6e6e" stroke="#fff" stroke-width="2.5"/><g stroke="#fff" stroke-width="4" fill="none" stroke-dasharray="20 12"><path d="M339,428 H500 L540,382"/><path d="M560,380.5 H606 Q613.6,380.5 613.4,389 L601.5,466 Q600.5,477 611,477 H721 Q736.5,477 735.8,468 L720,390 Q719,380.6 730,380.6 H790 L855,481 H994"/></g></g><path d="M650.9499999999999,457.86 A20.45,20.45 0 1 1 683.65,457.86 L667.3,479.3Z" fill="#e5542a"/><circle cx="667.3" cy="445.5" r="15" fill="#f0f0f0"/><g fill="#dfeaf2" fill-opacity="0.45"><rect x="374" y="552" width="580" height="5"/><rect x="374" y="566" width="580" height="5"/><rect x="374" y="580" width="470" height="5"/><rect x="588" y="318" width="300" height="5"/><rect x="588" y="332" width="170" height="5"/><rect x="375" y="274" width="140" height="6" fill-opacity="0.7"/></g><rect x="339" y="533.5" width="656" height="75" fill="#497796" fill-opacity="0.0"/></g></g><g transform="translate(80.4,490.0) scale(0.1391) translate(-339.3,-247)"><g clip-path="url(#tc)"><g>
<rect x="339" y="246" width="656" height="371" fill="url(#bg)"/>
<rect x="540" y="396" width="60" height="120" fill="url(#hole)"/>
<rect x="738" y="396" width="64" height="120" fill="url(#hole)"/>
<g fill="#8cc0dc" fill-opacity="0.28"><path d="M381,427 H397 V452 H381Z"/><path d="M437,407 L463.7,389.5 L484.3,407 V452 H437Z"/><path d="M484.3,367.8 H508.3 V452 H484.3Z"/><path d="M672,319 H712 V327 H720 Q740,329 740,346 V452 H672Z"/><path d="M740,350 H780 V452 H740Z"/><path d="M658,349 H672 V452 H658Z"/><path d="M811,336 L822,326 L840,336 V356 H856 V362 H880 V452 H811Z"/><path d="M841,354 H857 V452 H841Z"/><path d="M784,313 H813 V340 H784Z"/><path d="M857,364.4 H935 V452 H857Z"/><path d="M936.8,286.6 H946.5 L947.5,354 H993.5 V452 H935.8Z"/><path d="M972,302.6 H980.8 L981.5,354 H971.3Z"/><path d="M540,398 H568 V437 H540Z"/><path d="M784.8,397 H797.7 V457.5 H784.8Z"/></g><g fill="url(#dots)" fill-opacity="0.9"><path d="M358.4,429.6 H364 V418 H381.3 V452 H358.4Z"/><path d="M424.8,419.3 H443 V452 H424.8Z"/><path d="M451,417 H474 V452 H451Z"/><path d="M508.3,375 H516 V368 H529 V452 H508.3Z"/><path d="M617.1,332.7 L639.4,312.5 V324.6 H657 V452 H617.1Z"/><path d="M666.4,373 L673,365 H692 V452 H666.4Z"/><path d="M941.9,377 H953 V387.3 H961.3 V399.9 H966 V410 H941.9Z"/><path d="M568,398 H597 V437 H568Z"/><path d="M748,400 H775 V480 H748Z"/></g><rect x="339" y="420" width="656" height="114" fill="url(#low)"/><rect x="339" y="452" width="656" height="82" fill="#24587a"/><g fill="#8cc0dc" fill-opacity="0.06"><path d="M590,452 H640 V533 H590Z"/><path d="M784.8,452 H797.7 V500 H784.8Z"/><path d="M935,452 H993 V533 H935Z"/></g><rect x="339" y="533.5" width="656" height="75" fill="#477898"/><rect x="339" y="608.1" width="656" height="8" fill="#235d83"/></g><g><path d="M339,447 L515,447 Q524,447 528,441 L559.3,397.7 L561,404 L532,449 Q527,455.5 515,455.5 L339,455.5Z" fill="url(#slab)"/><path d="M558,487 Q556,505 578,505 L756,505 Q777,505 775,484 L744,397.5 L747,398 L781,492 Q783,516.5 758,516.5 L578,516.5 Q554,516 555,497Z" fill="url(#slab)"/><path d="M774.8,397.3 L838,500 Q845,510 860,510 L994,510 L994,519 L858,519 Q840,519 832,505 L774.8,404Z" fill="url(#slab)"/><path d="M339,409.5 L494,409.5 L529.3,369.9 Q531.5,368 536,368 L633,368 Q641.5,368 641.5,377 L641.5,449.5 L699,450.5 L692.5,376 Q692.5,368.3 701,368.3 L797,368.4 Q803,368.4 807,372.5 L880,452.6 L994,452.6 L994,510 L860,510 Q845,510 838,500 L774.8,397.3 L743.8,397.3 L774.5,483 Q777,505 756,505 L578,505 Q556,505 558,487 L590.5,397.7 L559.3,397.7 L528,441 Q524,447 515,447 L339,447Z" fill="#6e6e6e" stroke="#fff" stroke-width="2.5"/><g stroke="#fff" stroke-width="4" fill="none" stroke-dasharray="20 12"><path d="M339,428 H500 L540,382"/><path d="M560,380.5 H606 Q613.6,380.5 613.4,389 L601.5,466 Q600.5,477 611,477 H721 Q736.5,477 735.8,468 L720,390 Q719,380.6 730,380.6 H790 L855,481 H994"/></g></g><path d="M772.15,359.66 A20.45,20.45 0 1 1 804.85,359.66 L788.5,381.1Z" fill="#e5542a"/><circle cx="788.5" cy="347.3" r="15" fill="#f0f0f0"/><g fill="#dfeaf2" fill-opacity="0.45"><rect x="374" y="552" width="580" height="5"/><rect x="374" y="566" width="580" height="5"/><rect x="374" y="580" width="470" height="5"/><rect x="588" y="318" width="300" height="5"/><rect x="588" y="332" width="170" height="5"/><rect x="375" y="274" width="140" height="6" fill-opacity="0.7"/></g><rect x="339" y="533.5" width="656" height="75" fill="#497796" fill-opacity="0.0"/></g></g><g transform="translate(80.4,556.4) scale(0.1391) translate(-339.3,-247)"><g clip-path="url(#tc)"><g>
<rect x="339" y="246" width="656" height="371" fill="url(#bg)"/>
<rect x="540" y="396" width="60" height="120" fill="url(#hole)"/>
<rect x="738" y="396" width="64" height="120" fill="url(#hole)"/>
<g fill="#8cc0dc" fill-opacity="0.28"><path d="M381,427 H397 V452 H381Z"/><path d="M437,407 L463.7,389.5 L484.3,407 V452 H437Z"/><path d="M484.3,367.8 H508.3 V452 H484.3Z"/><path d="M672,319 H712 V327 H720 Q740,329 740,346 V452 H672Z"/><path d="M740,350 H780 V452 H740Z"/><path d="M658,349 H672 V452 H658Z"/><path d="M811,336 L822,326 L840,336 V356 H856 V362 H880 V452 H811Z"/><path d="M841,354 H857 V452 H841Z"/><path d="M784,313 H813 V340 H784Z"/><path d="M857,364.4 H935 V452 H857Z"/><path d="M936.8,286.6 H946.5 L947.5,354 H993.5 V452 H935.8Z"/><path d="M972,302.6 H980.8 L981.5,354 H971.3Z"/><path d="M540,398 H568 V437 H540Z"/><path d="M784.8,397 H797.7 V457.5 H784.8Z"/></g><g fill="url(#dots)" fill-opacity="0.9"><path d="M358.4,429.6 H364 V418 H381.3 V452 H358.4Z"/><path d="M424.8,419.3 H443 V452 H424.8Z"/><path d="M451,417 H474 V452 H451Z"/><path d="M508.3,375 H516 V368 H529 V452 H508.3Z"/><path d="M617.1,332.7 L639.4,312.5 V324.6 H657 V452 H617.1Z"/><path d="M666.4,373 L673,365 H692 V452 H666.4Z"/><path d="M941.9,377 H953 V387.3 H961.3 V399.9 H966 V410 H941.9Z"/><path d="M568,398 H597 V437 H568Z"/><path d="M748,400 H775 V480 H748Z"/></g><rect x="339" y="420" width="656" height="114" fill="url(#low)"/><rect x="339" y="452" width="656" height="82" fill="#24587a"/><g fill="#8cc0dc" fill-opacity="0.06"><path d="M590,452 H640 V533 H590Z"/><path d="M784.8,452 H797.7 V500 H784.8Z"/><path d="M935,452 H993 V533 H935Z"/></g><rect x="339" y="533.5" width="656" height="75" fill="#477898"/><rect x="339" y="608.1" width="656" height="8" fill="#235d83"/></g><g><path d="M339,447 L515,447 Q524,447 528,441 L559.3,397.7 L561,404 L532,449 Q527,455.5 515,455.5 L339,455.5Z" fill="url(#slab)"/><path d="M558,487 Q556,505 578,505 L756,505 Q777,505 775,484 L744,397.5 L747,398 L781,492 Q783,516.5 758,516.5 L578,516.5 Q554,516 555,497Z" fill="url(#slab)"/><path d="M774.8,397.3 L838,500 Q845,510 860,510 L994,510 L994,519 L858,519 Q840,519 832,505 L774.8,404Z" fill="url(#slab)"/><path d="M339,409.5 L494,409.5 L529.3,369.9 Q531.5,368 536,368 L633,368 Q641.5,368 641.5,377 L641.5,449.5 L699,450.5 L692.5,376 Q692.5,368.3 701,368.3 L797,368.4 Q803,368.4 807,372.5 L880,452.6 L994,452.6 L994,510 L860,510 Q845,510 838,500 L774.8,397.3 L743.8,397.3 L774.5,483 Q777,505 756,505 L578,505 Q556,505 558,487 L590.5,397.7 L559.3,397.7 L528,441 Q524,447 515,447 L339,447Z" fill="#6e6e6e" stroke="#fff" stroke-width="2.5"/><g stroke="#fff" stroke-width="4" fill="none" stroke-dasharray="20 12"><path d="M339,428 H500 L540,382"/><path d="M560,380.5 H606 Q613.6,380.5 613.4,389 L601.5,466 Q600.5,477 611,477 H721 Q736.5,477 735.8,468 L720,390 Q719,380.6 730,380.6 H790 L855,481 H994"/></g></g><path d="M908.15,459.36 A20.45,20.45 0 1 1 940.85,459.36 L924.5,480.8Z" fill="#e5542a"/><circle cx="924.5" cy="447" r="15" fill="#f0f0f0"/><g fill="#dfeaf2" fill-opacity="0.45"><rect x="374" y="552" width="580" height="5"/><rect x="374" y="566" width="580" height="5"/><rect x="374" y="580" width="470" height="5"/><rect x="588" y="318" width="300" height="5"/><rect x="588" y="332" width="170" height="5"/><rect x="375" y="274" width="140" height="6" fill-opacity="0.7"/></g><rect x="339" y="533.5" width="656" height="75" fill="#497796" fill-opacity="0.0"/></g></g><defs><radialGradient id="t7" cx="150" cy="660" r="90" gradientUnits="userSpaceOnUse"><stop offset="0" stop-color="#1b8bc4"/><stop offset="0.6" stop-color="#157bb0"/><stop offset="1" stop-color="#0c5a88"/></radialGradient></defs><defs><clipPath id="t7c"><rect x="60" y="600" width="140" height="38.5"/></clipPath></defs><rect x="80.4" y="622.6" width="91" height="30" rx="3" fill="url(#t7)" clip-path="url(#t7c)"/><rect x="79.2" y="223.3" width="93.3" height="53.3" rx="4" fill="none" stroke="#c43e1c" stroke-width="2"/><g fill="none" stroke="#ffffff" stroke-width="1.1" stroke-linecap="round" stroke-linejoin="round">
</g><circle cx="72.6" cy="103" r="5.9" fill="#fff"/><path d="M73.8,98.3 Q77,99 77.3,102.2 H73.8Z M73.8,103.8 H77.2 Q76.5,106.3 73.8,107Z" fill="#c43e1c"/><path d="M69.3,106 V100.2 H71.3 Q73,100.2 73,101.9 Q73,103.6 71.3,103.6 H69.3" fill="none" stroke="#c43e1c" stroke-width="1.2"/><g fill="none" stroke="#fff" stroke-width="1.1" stroke-linecap="round" stroke-linejoin="round">
<rect x="126.3" y="95.8" width="30" height="14" rx="7"/>
<path d="M165.5,97.5 H175 L177,99.5 V108.2 H165.5Z"/><path d="M168,97.5 V101 H174.5 V97.5"/><path d="M168,108.2 V104 H174.5 V108.2"/>
<path d="M188,101 Q192,96.5 196,99.5 Q199,102.5 195.5,106 L192.5,108.5"/><path d="M187.2,97.5 L187.8,101.5 L191.8,101"/>
<path d="M203.8,102.3 L205.7,104 L207.6,102.3"/>
<path d="M219,97.8 A5.6,5.6 0 1 0 223.5,99.2"/><path d="M219.5,96.5 L219,98 L221,99.5" />
<path d="M236.8,107.3 V98.5 H240.5 L242,100 H246.5 V102"/><path d="M236.8,107.3 L239,102.5 H248 L246,107.3Z"/>
<path d="M259.5,97.5 H265 L268.8,101.3 V108.3 H259.5Z"/><path d="M265,97.5 V101.3 H268.8"/>
<path d="M279.3,101 V106.7 H291 V98 H284"/><path d="M284,105 L290.5,98.3"/><path d="M279.5,98.5 Q281,96.8 282.5,98.5 Q281,100.5 279.5,101.5"/><path d="M281.5,104.3 H284"/>
<path d="M303,100.5 V97.3 H310.5 V100.5"/><path d="M301,106 V100.5 H312.5 V103"/><path d="M303,106 V108.5 H306"/><circle cx="309.8" cy="106" r="2.8"/><path d="M308.6,106.2 L309.6,107 L311.2,105"/>
<path d="M321.9,97.3 H333.7 M322.8,97.3 V103.5 H332.8 V97.3 M327.8,103.5 V108 M324.5,108 H331"/><path d="M326.5,99 L329.3,100.4 L326.5,101.8Z"/>
</g>
<g fill="none" stroke="#ffffff" stroke-opacity="0.45" stroke-width="1.1">
<path d="M343.8,97.5 H352 V101 M343.8,97.5 V106 H347 M343.8,100 H351 M343.8,102.5 H347"/><rect x="347.5" y="101.5" width="8" height="6.5" rx="1"/>
<path d="M366,105 V97.8 H375.8 V103"/><path d="M368.5,108 L371,104.5 M370.5,101.5 V107.5 L375,104.5Z"/>
</g>
<path d="M387.3,104.6 L391.9,97.3 L396.5,104.6 M389.2,101.8 H394.6" fill="none" stroke="#ffffff" stroke-width="1.1"/><rect x="385.6" y="105.7" width="12.5" height="2.6" fill="#ffffff"/>
<path d="M411.5,101 H416.7 M411.8,103 L414.1,105.5 L416.4,103" fill="none" stroke="#ffffff" stroke-width="1"/>
<circle cx="133.75" cy="102.8" r="5" fill="#ffffff"/>
<text x="141.8" y="105.8" font-size="7.6" fill="#ffffff" textLength="10.8" lengthAdjust="spacingAndGlyphs">Off</text>
<circle cx="660.8" cy="103.3" r="1.2" fill="#ffffff"/>
<path d="M731.6,101.5 L734.7,104.6 L737.8,101.5" fill="none" stroke="#ffffff" stroke-width="1.1"/>
<rect x="762" y="92" width="236" height="22" rx="3" fill="#f3d8d1" stroke="#e3b3a6" stroke-width="0.8"/>
<g fill="none" stroke="#8d4a3c" stroke-width="1.1"><circle cx="778" cy="101.3" r="3.3"/><path d="M775.6,103.8 L772.2,107.2"/></g>
<g fill="none" stroke="#ffffff" stroke-width="1.1"><path d="M1053,102.7 H1061.7"/><rect x="1088.3" y="98.8" width="8.2" height="8.2" rx="1.8"/><path d="M1123,98.5 L1131.5,107 M1131.5,98.5 L1123,107"/></g>
<rect x="1004.8" y="122.8" width="49.6" height="16.5" rx="3" fill="#fdfdfd" stroke="#c6c6c6" stroke-width="0.9"/>
<circle cx="1011.6" cy="131" r="4.3" fill="none" stroke="#262626" stroke-width="1"/><circle cx="1011.6" cy="131" r="2.4" fill="#262626"/>
<text x="1019.2" y="134.6" font-size="10" fill="#262626" textLength="30" lengthAdjust="spacingAndGlyphs">Record</text>
<rect x="1060.6" y="122.8" width="16.9" height="16.5" rx="3" fill="#fdfdfd" stroke="#c6c6c6" stroke-width="0.9"/>
<path d="M1065.5,127.2 H1073 V133 H1068.5 L1066,135.3 V133 H1065.5Z" fill="none" stroke="#262626" stroke-width="0.9" stroke-linejoin="round"/>
<rect x="1083.8" y="123" width="51.2" height="16.3" rx="3" fill="#c43e1c"/>
<path d="M1087.5,137 V132 L1090,130 V128 L1093,126.5 L1095,128.5 L1094,131.5 H1091.5 M1087.5,137 H1095 V132.5" fill="none" stroke="#fff" stroke-width="0.9" stroke-linejoin="round"/>
<text x="1098.6" y="134.6" font-size="10.5" fill="#fff" font-weight="bold" textLength="24.8" lengthAdjust="spacingAndGlyphs">Share</text>
<path d="M1129.2,130.2 L1130.9,131.9 L1132.6,130.2" fill="none" stroke="#fff" stroke-width="0.9"/>
<rect x="388" y="138.6" width="48.5" height="2" rx="1" fill="#c43e1c"/>
<rect x="172.8" y="149.5" width="1" height="44.5" fill="#dedede"/>
<rect x="238.0" y="146" width="1" height="63" fill="#dedede"/>
<rect x="297.2" y="146" width="1" height="63" fill="#dedede"/>
<rect x="385.5" y="149.5" width="1" height="44.5" fill="#dedede"/>
<rect x="674.3" y="146" width="1" height="63" fill="#dedede"/>
<rect x="841.8" y="146" width="1" height="63" fill="#dedede"/>
<rect x="951.8" y="146" width="1" height="63" fill="#dedede"/>
<g fill="none" stroke="#5c5c5c" stroke-width="1.1" stroke-linecap="round" stroke-linejoin="round">
<path d="M80.3,148.6 H101.7 M81.8,148.6 V160.3 H100.6 V148.6 M91.2,160.3 V167.5 M86.5,167.6 H95.8"/>
<path d="M130.3,148.6 H151.7 M131.8,148.6 V160.3 H150.6 V148.6 M141.2,160.3 V167.5 M136.5,167.6 H145.8"/>
<path d="M193.6,148.6 H215.8 M195.3,148.6 V160.3 H214 V148.6 M204.7,160.3 V167.5 M200,167.6 H209.3"/>
<path d="M143,152.5 H148 M143,154.5 H148 M143,156.5 H148"/>
</g>
<path d="M89,151.3 L94,154.5 L89,157.6Z" fill="none" stroke="#2b8a3e" stroke-width="1.2" stroke-linejoin="round"/>
<rect x="134.4" y="151.3" width="6.3" height="6.1" fill="#3b8fd9"/>
<rect x="195.8" y="149" width="18" height="11" fill="#8c8c8c"/><rect x="196.8" y="149.6" width="10" height="10" fill="#4c9be0"/><rect x="207.5" y="150" width="5.6" height="9.2" fill="#cfcfcf"/>
<rect x="258.2" y="150.8" width="19.8" height="14.8" rx="1" fill="#f6f6f6" stroke="#5c5c5c" stroke-width="1.3"/>
<path d="M269.5,161 Q269.5,167 274.5,167 Q279.5,167 279.5,161" fill="#fff" stroke="#fff" stroke-width="2"/><rect x="272" y="157.5" width="5" height="7.5" rx="2.5" fill="#4a9de0" stroke="#2b7cc4" stroke-width="0.6"/><path d="M270.5,163 Q270.5,166.5 274.5,166.5 Q278.5,166.5 278.5,163 M274.5,166.5 V168.5" fill="none" stroke="#444" stroke-width="0.8"/>
<path d="M316.8,148.8 H326 V155 M316.8,148.8 V163.3 H323" fill="none" stroke="#5c5c5c" stroke-width="1.1"/><path d="M319,151.5 H320 M321.5,151.5 H324 M319,154.5 H320 M321.5,154.5 H323.5 M319,157.5 H320 M319,160.5 H320" stroke="#5c5c5c" stroke-width="1"/>
<path d="M323.6,155.5 H337 M324.8,155.5 V161.3 H335.8 V155.5 M330.3,161.3 V167.8 M327.3,168 H333.3" fill="none" stroke="#2f8ee0" stroke-width="1.1"/>
<path d="M377,150.8 V166 H356.8Z" fill="#5aaee6"/><rect x="356.8" y="150.8" width="20.2" height="15.2" fill="none" stroke="#5c5c5c" stroke-width="1.2"/><path d="M356.8,166 L377,150.8" stroke="#333" stroke-width="1.1"/>
<rect x="400" y="150.8" width="19.5" height="14.8" rx="1" fill="#f6f6f6" stroke="#5c5c5c" stroke-width="1.3"/>
<circle cx="416.6" cy="164.3" r="5.5" fill="#fff"/><circle cx="416.6" cy="164.3" r="4.3" fill="none" stroke="#2f8ee0" stroke-width="1.2"/><path d="M416.6,162 V164.5 H418.5 M415.3,158.8 H418" fill="none" stroke="#2f8ee0" stroke-width="1"/>
<path d="M436.5,148.8 H458 M437.8,148.8 V160 H456.8 V148.8 M447.3,160 V166.5 M443,166.8 H448" fill="none" stroke="#5c5c5c" stroke-width="1.1"/><rect x="440" y="151.3" width="6" height="5.8" fill="#3b8fd9"/><path d="M448.5,152.5 H454 M448.5,154.5 H454 M448.5,156.5 H454" stroke="#5c5c5c" stroke-width="0.9"/>
<circle cx="453.3" cy="164.1" r="5.8" fill="#fff" stroke="#444" stroke-width="1"/><circle cx="453.3" cy="164.1" r="3.3" fill="#e81123"/>
<path d="M215.3,188.4 L217,190.10000000000002 L218.7,188.4" fill="none" stroke="#444" stroke-width="0.9"/>
<path d="M445.3,188.6 L447,190.3 L448.7,188.6" fill="none" stroke="#444" stroke-width="0.9"/>
<path d="M932.3,182.6 L934,184.3 L935.7,182.6" fill="none" stroke="#444" stroke-width="0.9"/>
<rect x="467.5" y="155.2" width="9" height="9" rx="1.6" fill="#f3f3f3" stroke="#cfcfcf" stroke-width="0.9"/>
<rect x="467.5" y="178.2" width="9" height="9" rx="1.6" fill="#fff" stroke="#6e6e6e" stroke-width="0.9"/><path d="M469.5,182.79999999999998 L471.3,184.6 L474.7,181.0" fill="none" stroke="#262626" stroke-width="1"/>
<rect x="569.5" y="155.2" width="9" height="9" rx="1.6" fill="#fff" stroke="#6e6e6e" stroke-width="0.9"/><path d="M571.5,159.79999999999998 L573.3,161.6 L576.7,158.0" fill="none" stroke="#262626" stroke-width="1"/>
<rect x="569.5" y="178.2" width="9" height="9" rx="1.6" fill="#fff" stroke="#6e6e6e" stroke-width="0.9"/><path d="M571.5,182.79999999999998 L573.3,184.6 L576.7,181.0" fill="none" stroke="#262626" stroke-width="1"/>
<rect x="683.3" y="177.2" width="9" height="9" rx="1.6" fill="#fff" stroke="#6e6e6e" stroke-width="0.9"/><path d="M685.3,181.79999999999998 L687.0999999999999,183.6 L690.5,180.0" fill="none" stroke="#262626" stroke-width="1"/>
<rect x="851.2" y="155.2" width="9" height="9" rx="1.6" fill="#fff" stroke="#6e6e6e" stroke-width="0.9"/>
<rect x="683" y="155.3" width="11.5" height="7.3" rx="0.8" fill="none" stroke="#2f8ee0" stroke-width="1.2"/><path d="M686.5,164.3 H691 M688.7,162.6 V164.3" stroke="#2f8ee0" stroke-width="1.1"/>
<rect x="733.6" y="151.2" width="103" height="15.8" rx="3" fill="#fff" stroke="#a9a9a9" stroke-width="0.9"/>
<path d="M829.5,158 L831.3,159.8 L833.1,158" fill="none" stroke="#333" stroke-width="1"/>
<rect x="677.6" y="171.3" width="96.2" height="20" rx="1" fill="none" stroke="#e3242b" stroke-width="1.3"/>
<rect x="851.5" y="176.5" width="11" height="9.5" fill="#e9e9e9" stroke="#5c5c5c" stroke-width="1"/><path d="M853,183.5 H857" stroke="#5c5c5c" stroke-width="0.9"/><circle cx="860.5" cy="184.5" r="3" fill="#2f8ee0"/><circle cx="860.5" cy="184.5" r="1" fill="#fff"/>
<path d="M1124.5,201.5 L1128,205 L1131.5,201.5" fill="none" stroke="#333" stroke-width="1"/>
<rect x="185.5" y="213" width="12.5" height="425.5" fill="#f6f6f6"/><rect x="198" y="213" width="1.8" height="425.5" fill="#dcdcdc"/>
<path d="M188,221.3 L191.05,216.7 L194.1,221.3Z" fill="#555" stroke="#555" stroke-width="0.6" stroke-linejoin="round"/>
<rect x="187.8" y="227.5" width="6.2" height="354.6" rx="3.1" fill="#6f6f6f"/>
<path d="M188,633 L191.05,637.6 L194.1,633Z" fill="#555" stroke="#555" stroke-width="0.6" stroke-linejoin="round"/>
<text x="64" y="231.2" font-size="10" fill="#c43e1c" textLength="4.6" lengthAdjust="spacingAndGlyphs">1</text>
<text x="63.3" y="297.6" font-size="10" fill="#444" textLength="6" lengthAdjust="spacingAndGlyphs">2</text>
<polygon points="66.30,301.40 67.12,303.67 69.53,303.75 67.63,305.23 68.30,307.55 66.30,306.20 64.30,307.55 64.97,305.23 63.07,303.75 65.48,303.67" fill="#444"/>
<text x="63.3" y="364.1" font-size="10" fill="#444" textLength="6" lengthAdjust="spacingAndGlyphs">3</text>
<polygon points="66.30,367.90 67.12,370.17 69.53,370.25 67.63,371.73 68.30,374.05 66.30,372.70 64.30,374.05 64.97,371.73 63.07,370.25 65.48,370.17" fill="#444"/>
<text x="63.3" y="430.5" font-size="10" fill="#444" textLength="6" lengthAdjust="spacingAndGlyphs">4</text>
<polygon points="66.30,434.30 67.12,436.57 69.53,436.65 67.63,438.13 68.30,440.45 66.30,439.10 64.30,440.45 64.97,438.13 63.07,436.65 65.48,436.57" fill="#444"/>
<text x="63.3" y="497" font-size="10" fill="#444" textLength="6" lengthAdjust="spacingAndGlyphs">5</text>
<polygon points="66.30,500.80 67.12,503.07 69.53,503.15 67.63,504.63 68.30,506.95 66.30,505.60 64.30,506.95 64.97,504.63 63.07,503.15 65.48,503.07" fill="#444"/>
<text x="63.3" y="563.4" font-size="10" fill="#444" textLength="6" lengthAdjust="spacingAndGlyphs">6</text>
<polygon points="66.30,567.20 67.12,569.47 69.53,569.55 67.63,571.03 68.30,573.35 66.30,572.00 64.30,573.35 64.97,571.03 63.07,569.55 65.48,569.47" fill="#444"/>
<text x="63.3" y="629.6" font-size="10" fill="#444" textLength="6" lengthAdjust="spacingAndGlyphs">7</text>
<rect x="339.8" y="218.6" width="22.8" height="22.6" rx="5" fill="#fff" stroke="#dcdcdc" stroke-width="1"/>
<path d="M351.4,224.5 L352.4,226.4 L354.4,227.4 L352.4,228.4 L351.4,230.3 L350.4,228.4 L348.4,227.4 L350.4,226.4Z" fill="#1a1a1a"/><path d="M354.6,229.6 L356.2,231.2 L354.6,232.8 L353,231.2Z" fill="#1a1a1a"/><path d="M346,232 L347.4,230.6 M348.4,232.8 L349.4,231.8 M346.3,234.8 L347.3,233.8 M349.2,235 L350.5,233.7" stroke="#222" stroke-width="0.9"/>
<rect x="1132" y="213" width="12" height="425.5" fill="#f7f7f7"/>
<path d="M1135.2,221.2 L1138.2,216.8 L1141.2,221.2Z" fill="#555" stroke="#555" stroke-width="0.6" stroke-linejoin="round"/>
<rect x="1135.2" y="225.2" width="5.9" height="51.6" rx="2.95" fill="#6f6f6f"/>
<path d="M1135.3,592.8 L1138.2,597 L1141.1,592.8Z" fill="#555" stroke="#555" stroke-width="0.6" stroke-linejoin="round"/>
<path d="M1135.3,606.5 L1138.2,602.5 L1141.1,606.5Z M1135.3,610.8 L1138.2,606.8 L1141.1,610.8Z" fill="#555" stroke="#555" stroke-width="0.6" stroke-linejoin="round"/>
<path d="M1135.3,615 L1138.2,619 L1141.1,615Z M1135.3,619.3 L1138.2,623.3 L1141.1,619.3Z" fill="#555" stroke="#555" stroke-width="0.6" stroke-linejoin="round"/>
<g fill="none" stroke="#444" stroke-width="0.9" stroke-linejoin="round">
<path d="M116.3,645.5 H121 V654.5 H116.3Z M121,645.5 H126 V651 L123.5,654.5 H121"/><path d="M123.5,647 V650.5 M122,652 L123.5,654 L125,652"/>
<circle cx="231.3" cy="645.8" r="1.3"/><path d="M227,648 H235.6 M231.3,648 V651.5 L228.5,655 M231.3,651.5 L234,655"/><path d="M233.5,652 L236,654.5 M236,652 L233.5,654.5"/>
<path d="M753.5,650.5 H765 M753.5,652.5 H765 M753.5,654.5 H765 M756.5,647.5 L759.2,645 L762,647.5"/>
<rect x="799.5" y="645.5" width="9.5" height="7" rx="0.8"/><path d="M802.5,654.5 H806"/><circle cx="806" cy="651.5" r="2.2" fill="#444"/>
</g>
<rect x="878.7" y="642.5" width="28.1" height="14.2" fill="#dedede"/>
<g fill="none" stroke="#444" stroke-width="0.9">
<rect x="888.2" y="645.2" width="9.8" height="8.5"/><path d="M890,645.2 V653.7"/><rect x="891.8" y="647.3" width="4.4" height="3"/>
<rect x="917" y="645.4" width="4" height="3.4"/><rect x="923" y="645.4" width="4" height="3.4"/><rect x="917" y="650.6" width="4" height="3.4"/><rect x="923" y="650.6" width="4" height="3.4"/>
<path d="M945.2,645.5 H955.2 V654 H945.2Z M950.2,645.5 V654 M946.8,647 V652.5 M948.5,647 V652.5 M952,647 V652.5 M953.6,647 V652.5"/>
<path d="M975.2,645.2 H984.8 M976.2,645.2 V650.5 H983.8 V645.2 M980,650.5 V654 M977.5,654.2 H982.5"/><path d="M979,647 L981.3,648 L979,649Z"/>
<path d="M998,649.3 H1003.3 M1083.3,649.3 H1088.7 M1086,646.6 V652"/>
</g>
<rect x="1007.3" y="648.9" width="72" height="0.9" fill="#777"/><rect x="1042.9" y="647" width="0.9" height="4.6" fill="#777"/><rect x="1031.3" y="645.3" width="3.4" height="8" rx="0.6" fill="#444"/>
<g fill="none" stroke="#444" stroke-width="1"><circle cx="1127.3" cy="649" r="2.8"/><path d="M1127.3,643.8 L1125.8,645.5 H1128.8Z M1127.3,654.2 L1125.8,652.5 H1128.8Z M1122.1,649 L1123.8,647.5 V650.5Z M1132.5,649 L1130.8,647.5 V650.5Z" fill="#444"/></g>
<text x="89.6" y="105.8" font-size="8" fill="#ffffff" font-weight="normal" textLength="32.1" lengthAdjust="spacingAndGlyphs" >AutoSave</text>
<text x="432.6" y="106.4" font-size="9.3" fill="#ffffff" font-weight="normal" textLength="219.6" lengthAdjust="spacingAndGlyphs" >80004-02-isometric-roads-powerpoint-roadmap-16x9-...</text>
<text x="666.0" y="106.4" font-size="9.3" fill="#ffffff" font-weight="normal" textLength="62.0" lengthAdjust="spacingAndGlyphs" >Saved to this PC</text>
<text x="791.3" y="105.7" font-size="9.5" fill="#8d4a3c" font-weight="normal" textLength="29.8" lengthAdjust="spacingAndGlyphs" >Search</text>
<text x="69.6" y="135.3" font-size="10" fill="#262626" font-weight="normal" textLength="16.3" lengthAdjust="spacingAndGlyphs" >File</text>
<text x="103.8" y="135.3" font-size="10" fill="#262626" font-weight="normal" textLength="26.6" lengthAdjust="spacingAndGlyphs" >Home</text>
<text x="143.6" y="135.3" font-size="10" fill="#262626" font-weight="normal" textLength="25.8" lengthAdjust="spacingAndGlyphs" >Insert</text>
<text x="183.3" y="135.3" font-size="10" fill="#262626" font-weight="normal" textLength="23.1" lengthAdjust="spacingAndGlyphs" >Draw</text>
<text x="219.6" y="135.3" font-size="10" fill="#262626" font-weight="normal" textLength="30.5" lengthAdjust="spacingAndGlyphs" >Design</text>
<text x="263.6" y="135.3" font-size="10" fill="#262626" font-weight="normal" textLength="47.8" lengthAdjust="spacingAndGlyphs" >Transitions</text>
<text x="324.3" y="135.3" font-size="10" fill="#262626" font-weight="normal" textLength="50.1" lengthAdjust="spacingAndGlyphs" >Animations</text>
<text x="387.6" y="135.3" font-size="10" fill="#262626" font-weight="normal" textLength="48.6" lengthAdjust="spacingAndGlyphs" stroke="#262626" stroke-width="0.35">Slide Show</text>
<text x="450.1" y="135.3" font-size="10" fill="#262626" font-weight="normal" textLength="31.1" lengthAdjust="spacingAndGlyphs" >Record</text>
<text x="495.6" y="135.3" font-size="10" fill="#262626" font-weight="normal" textLength="31.1" lengthAdjust="spacingAndGlyphs" >Review</text>
<text x="540.4" y="135.3" font-size="10" fill="#262626" font-weight="normal" textLength="21.8" lengthAdjust="spacingAndGlyphs" >View</text>
<text x="576.1" y="135.3" font-size="10" fill="#262626" font-weight="normal" textLength="44.7" lengthAdjust="spacingAndGlyphs" >Developer</text>
<text x="634.4" y="135.3" font-size="10" fill="#262626" font-weight="normal" textLength="21.0" lengthAdjust="spacingAndGlyphs" >Help</text>
<text x="669.0" y="135.3" font-size="10" fill="#262626" font-weight="normal" textLength="35.0" lengthAdjust="spacingAndGlyphs" >Acrobat</text>
<text x="81.3" y="180.3" font-size="8.3" fill="#303030" font-weight="normal" textLength="19.9" lengthAdjust="spacingAndGlyphs" >From</text>
<text x="71.3" y="191.7" font-size="8.3" fill="#303030" font-weight="normal" textLength="39.1" lengthAdjust="spacingAndGlyphs" >Beginning</text>
<text x="131.3" y="180.3" font-size="8.3" fill="#303030" font-weight="normal" textLength="20.4" lengthAdjust="spacingAndGlyphs" >From</text>
<text x="116.3" y="191.7" font-size="8.3" fill="#303030" font-weight="normal" textLength="49.9" lengthAdjust="spacingAndGlyphs" >Current Slide</text>
<text x="179.3" y="180.3" font-size="8.3" fill="#303030" font-weight="normal" textLength="50.8" lengthAdjust="spacingAndGlyphs" >Custom Slide</text>
<text x="190.4" y="191.7" font-size="8.3" fill="#303030" font-weight="normal" textLength="21.7" lengthAdjust="spacingAndGlyphs" >Show</text>
<text x="250.3" y="180.1" font-size="8.3" fill="#303030" font-weight="normal" textLength="35.1" lengthAdjust="spacingAndGlyphs" >Rehearse</text>
<text x="246.4" y="191.3" font-size="8.3" fill="#303030" font-weight="normal" textLength="42.9" lengthAdjust="spacingAndGlyphs" >with Coach</text>
<text x="313.9" y="180.1" font-size="8.3" fill="#303030" font-weight="normal" textLength="26.3" lengthAdjust="spacingAndGlyphs" >Set Up</text>
<text x="305.1" y="191.3" font-size="8.3" fill="#303030" font-weight="normal" textLength="43.5" lengthAdjust="spacingAndGlyphs" >Slide Show</text>
<text x="357.0" y="180.1" font-size="8.3" fill="#303030" font-weight="normal" textLength="19.0" lengthAdjust="spacingAndGlyphs" >Hide</text>
<text x="357.0" y="191.3" font-size="8.3" fill="#303030" font-weight="normal" textLength="19.0" lengthAdjust="spacingAndGlyphs" >Slide</text>
<text x="392.3" y="180.1" font-size="8.3" fill="#303030" font-weight="normal" textLength="35.1" lengthAdjust="spacingAndGlyphs" >Rehearse</text>
<text x="395.2" y="191.3" font-size="8.3" fill="#303030" font-weight="normal" textLength="30.2" lengthAdjust="spacingAndGlyphs" >Timings</text>
<text x="433.4" y="181.1" font-size="8.3" fill="#303030" font-weight="normal" textLength="27.2" lengthAdjust="spacingAndGlyphs" >Record</text>
<text x="479.6" y="185.0" font-size="8.3" fill="#303030" font-weight="normal" textLength="58.4" lengthAdjust="spacingAndGlyphs" >Play Narrations</text>
<text x="581.6" y="162.0" font-size="8.3" fill="#303030" font-weight="normal" textLength="46.8" lengthAdjust="spacingAndGlyphs" >Use Timings</text>
<text x="581.6" y="185.0" font-size="8.3" fill="#303030" font-weight="normal" textLength="81.8" lengthAdjust="spacingAndGlyphs" >Show Media Controls</text>
<text x="696.2" y="162.2" font-size="8.3" fill="#303030" font-weight="normal" textLength="33.4" lengthAdjust="spacingAndGlyphs" >Monitor:</text>
<text x="736.1" y="162.2" font-size="8.3" fill="#303030" font-weight="normal" textLength="39.3" lengthAdjust="spacingAndGlyphs" >Automatic</text>
<text x="695.5" y="185.9" font-size="8.3" fill="#303030" font-weight="normal" textLength="72.8" lengthAdjust="spacingAndGlyphs" >Use Presenter View</text>
<text x="864.1" y="162.2" font-size="8.3" fill="#303030" font-weight="normal" textLength="78.2" lengthAdjust="spacingAndGlyphs" >Always Use Subtitles</text>
<text x="865.8" y="185.9" font-size="8.3" fill="#303030" font-weight="normal" textLength="63.2" lengthAdjust="spacingAndGlyphs" >Subtitle Settings</text>
<text x="479.6" y="162.0" font-size="8.3" fill="#a6a6a6" font-weight="normal" textLength="80.4" lengthAdjust="spacingAndGlyphs" >Keep Slides Updated</text>
<text x="122.9" y="208.7" font-size="7.6" fill="#444444" font-weight="normal" textLength="55.0" lengthAdjust="spacingAndGlyphs" >Start Slide Show</text>
<text x="251.8" y="208.9" font-size="7.6" fill="#444444" font-weight="normal" textLength="31.2" lengthAdjust="spacingAndGlyphs" >Rehearse</text>
<text x="473.6" y="208.6" font-size="7.6" fill="#444444" font-weight="normal" textLength="23.2" lengthAdjust="spacingAndGlyphs" >Set Up</text>
<text x="742.1" y="208.4" font-size="7.6" fill="#444444" font-weight="normal" textLength="31.7" lengthAdjust="spacingAndGlyphs" >Monitors</text>
<text x="862.9" y="208.4" font-size="7.6" fill="#444444" font-weight="normal" textLength="68.5" lengthAdjust="spacingAndGlyphs" >Captions &amp; Subtitles</text>
<text x="62.8" y="652.3" font-size="7.8" fill="#444444" font-weight="normal" textLength="39.6" lengthAdjust="spacingAndGlyphs" >Slide 1 of 7</text>
<text x="139.1" y="652.3" font-size="7.8" fill="#444444" font-weight="normal" textLength="75.7" lengthAdjust="spacingAndGlyphs" >English (United States)</text>
<text x="238.8" y="652.3" font-size="7.8" fill="#262626" font-weight="bold" textLength="88.3" lengthAdjust="spacingAndGlyphs" >Accessibility: Investigate</text>
<text x="765.6" y="652.3" font-size="7.8" fill="#444444" font-weight="normal" textLength="20.8" lengthAdjust="spacingAndGlyphs" >Notes</text>
<text x="810.6" y="652.3" font-size="7.8" fill="#444444" font-weight="normal" textLength="53.8" lengthAdjust="spacingAndGlyphs" >Display Settings</text>
<text x="1097.6" y="652.3" font-size="7.8" fill="#444444" font-weight="normal" textLength="14.8" lengthAdjust="spacingAndGlyphs" >71%</text>
<text x="1022.5" y="717.8" font-size="15.5" fill="#595959" font-weight="normal" textLength="129.2" lengthAdjust="spacingAndGlyphs" >SLIDEMODEL.COM</text>
</svg>
</body></html>
